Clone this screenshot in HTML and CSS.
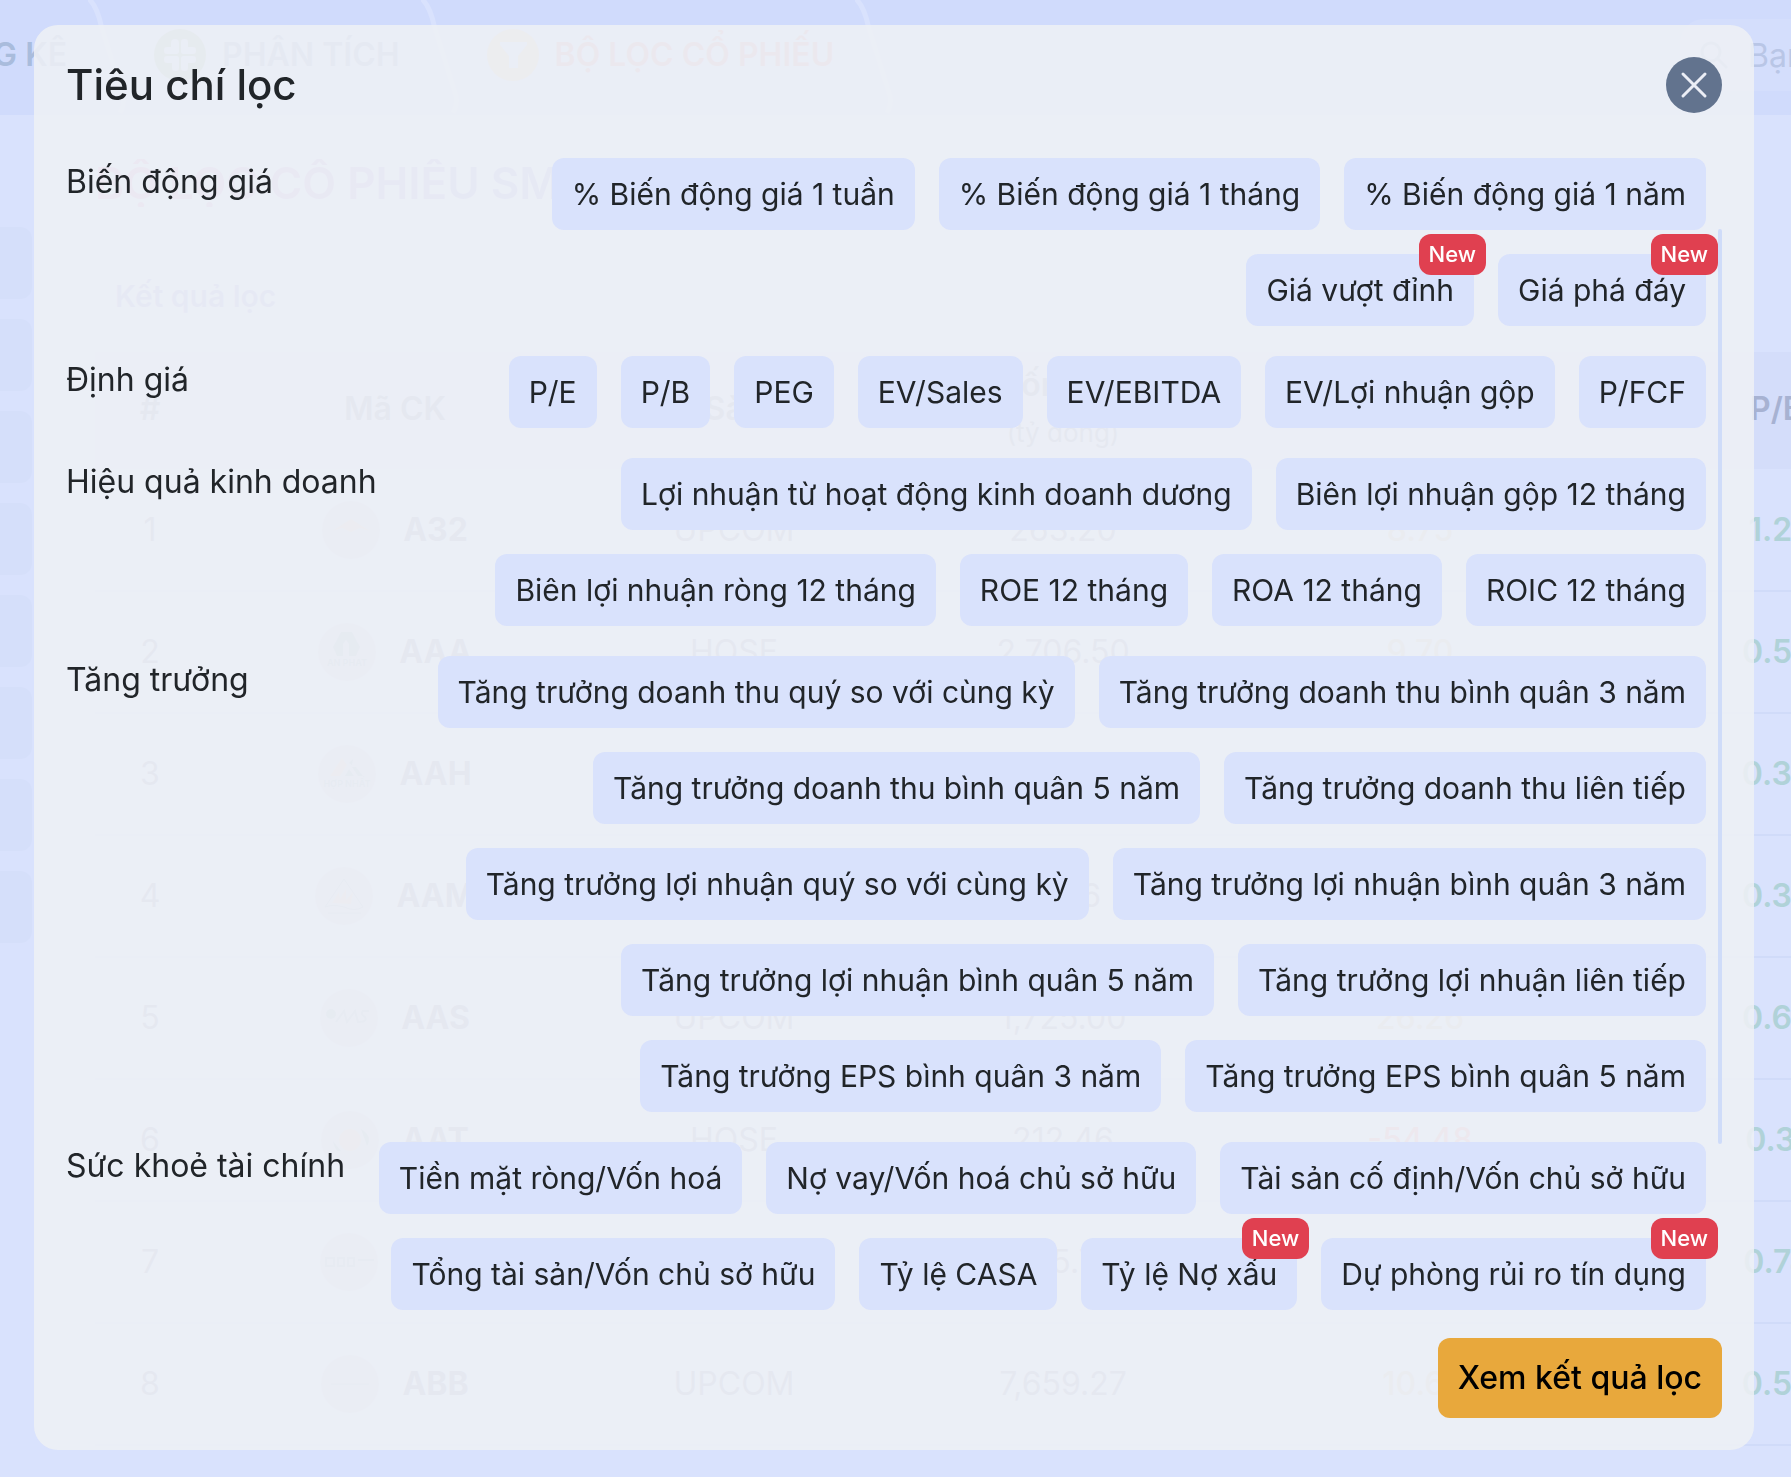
FILE: index.html
```html
<!DOCTYPE html>
<html lang="vi">
<head>
  <meta charset="UTF-8">
  <meta name="viewport" content="width=device-width, initial-scale=1.0">
  <title>Bộ lọc cổ phiếu</title>
  <link rel="stylesheet" href="styles.css">
</head>
<body>
  <div class="page">
    <header class="topbar">
      <nav class="tabs">
        <a href="#" class="tab tab-first">THỐNG KÊ</a>
        <svg class="divider" width="40" height="115" viewBox="0 0 40 115"><path d="M0 -2Q9 6 13 25L35 96Q37 104 32 113"/></svg>
        <a href="#" class="tab">
          <svg width="52" height="52" viewBox="0 0 52 52">
            <circle cx="26" cy="26" r="26" fill="#b3c9c8"/>
            <g fill="#cfdbfb">
              <rect x="17" y="10" width="8" height="15" rx="4"/>
              <rect x="10" y="18" width="15" height="7" rx="3"/>
              <rect x="27" y="10" width="7" height="15" rx="3"/>
              <rect x="27" y="18" width="15" height="7" rx="3"/>
              <rect x="10" y="27" width="15" height="7" rx="3"/>
              <rect x="18" y="27" width="7" height="15" rx="3"/>
              <rect x="27" y="27" width="15" height="7" rx="3"/>
              <rect x="27" y="27" width="7" height="15" rx="3"/>
            </g>
          </svg>
          PHÂN TÍCH
        </a>
        <svg class="divider" width="40" height="115" viewBox="0 0 40 115"><path d="M0 -2Q9 6 13 25L35 96Q37 104 32 113"/></svg>
        <a href="#" class="tab active">
          <svg width="52" height="52" viewBox="0 0 52 52">
            <circle cx="26" cy="26" r="26" fill="#dfd3c8"/>
            <path d="M13 13H40V16L31 27V39H22V27L13 16Z" fill="#cfdbfb"/>
          </svg>
          BỘ LỌC CỔ PHIẾU
        </a>
        <svg class="divider" width="40" height="115" viewBox="0 0 40 115"><path d="M0 -2Q9 6 13 25L35 96Q37 104 32 113"/></svg>
      </nav>
      <label class="search">
        <svg width="28" height="28" viewBox="0 0 28 28" fill="none" stroke="#bccae8" stroke-width="3" stroke-linecap="round"><circle cx="11" cy="11" r="9"/><path d="M18 18L26 26"/></svg>
        <input type="text" placeholder="Bạn muốn tìm gì?" aria-label="Tìm kiếm">
      </label>
    </header>

    <div class="main">
      <aside class="sidebar">
        <span></span><span></span><span></span><span></span>
        <span></span><span></span><span></span><span></span>
      </aside>
      <section class="content">
        <h1>BỘ LỌC CỔ PHIẾU SMART</h1>
        <h2>Kết quả lọc</h2>
        <table>
          <colgroup><col class="c-no"><col class="c-code"><col class="c-floor"><col class="c-cap"><col class="c-pe"><col class="c-pb"></colgroup>
          <thead>
            <tr><th>#</th><th>Mã CK</th><th>Sàn</th><th>Vốn hoá<small>(tỷ đồng)</small></th><th>P/E</th><th>P/B</th></tr>
          </thead>
          <tbody>
            <tr>
              <td>1</td>
              <td><div class="code"><svg class="logo" viewBox="0 0 58 58"><circle cx="29" cy="29" r="29"/><path class="warm" d="M10 30L29 18L48 30L38 27L29 31L20 27Z"/></svg>A32</div></td>
              <td>UPCOM</td><td>263.20</td><td class="pe">8.75</td><td class="pb">1.21</td>
            </tr>
            <tr>
              <td>2</td>
              <td><div class="code"><svg class="logo" viewBox="0 0 58 58"><circle cx="29" cy="29" r="29"/><path class="cool" d="M23 9H34L42 24L38 33H31V21L28 17L25 21V33H19L15 24Z"/><text x="29" y="43">AN PHAT</text></svg>AAA</div></td>
              <td>HOSE</td><td>2,706.50</td><td class="pe">9.70</td><td class="pb">0.52</td>
            </tr>
            <tr>
              <td>3</td>
              <td><div class="code"><svg class="logo" viewBox="0 0 58 58"><circle cx="29" cy="29" r="29"/><path class="warm" d="M12 31L24 13L29 20L22 31Z"/><path class="cool" d="M27 31L31 24L36 31ZM34 22L38 22L45 31H40ZM31 18L35 14L34 20Z"/><text x="29" y="42">HỢP NHẤT</text></svg>AAH</div></td>
              <td>UPCOM</td><td>424.42</td><td class="pe">12.40</td><td class="pb">0.36</td>
            </tr>
            <tr>
              <td>4</td>
              <td><div class="code"><svg class="logo" viewBox="0 0 58 58"><circle cx="29" cy="29" r="29"/><path class="line" d="M10 40L29 12L48 40Q40 45 29 40Q18 37 10 40ZM13 46H46"/><path class="warm" d="M17 36L24 25L25 32L31 22V33L38 25L36 37Z"/></svg>AAM</div></td>
              <td>HOSE</td><td>73.16</td><td class="pe">30.12</td><td class="pb">0.35</td>
            </tr>
            <tr>
              <td>5</td>
              <td><div class="code"><svg class="logo" viewBox="0 0 58 58"><circle cx="29" cy="29" r="29"/><circle class="cool" cx="11" cy="25" r="5"/><path class="line thick" d="M16 33L24 22L27 33L35 22L38 33Q48 33 45 28Q40 25 43 22L49 22"/></svg>AAS</div></td>
              <td>UPCOM</td><td>1,725.00</td><td class="pe">26.26</td><td class="pb">0.65</td>
            </tr>
            <tr>
              <td>6</td>
              <td><div class="code"><svg class="logo" viewBox="0 0 58 58"><circle cx="29" cy="29" r="29"/><circle class="warm" cx="29" cy="29" r="11"/><path class="cool" d="M40 18Q52 25 46 35ZM12 30Q14 42 20 40Z"/></svg>AAT</div></td>
              <td>HOSE</td><td>212.46</td><td class="pe down">-54.48</td><td class="pb">0.31</td>
            </tr>
            <tr>
              <td>7</td>
              <td><div class="code"><svg class="logo" viewBox="0 0 58 58"><circle cx="29" cy="29" r="29"/><path class="line thick" d="M6 25H14V33H6ZM18 25H24V33H18ZM28 25H34V33H28ZM38 27H54"/></svg>AAV</div></td>
              <td>HNX</td><td>445.75</td><td class="pe">18.20</td><td class="pb">0.74</td>
            </tr>
            <tr>
              <td>8</td>
              <td><div class="code"><svg class="logo" viewBox="0 0 58 58"><circle cx="29" cy="29" r="29"/><path class="line" d="M10 29H48"/></svg>ABB</div></td>
              <td>UPCOM</td><td>7,659.27</td><td class="pe">10.61</td><td class="pb">0.55</td>
            </tr>
          </tbody>
        </table>
      </section>
    </div>
  </div>

  <div class="overlay">
    <div class="modal" role="dialog" aria-labelledby="modal-title">
      <div class="modal-header">
        <h2 id="modal-title">Tiêu chí lọc</h2>
        <button class="close" aria-label="Đóng">
          <svg width="28" height="28" viewBox="0 0 28 28"><path d="M3 3L25 25M25 3L3 25"/></svg>
        </button>
      </div>

      <div class="modal-body">
        <div class="groups">
          <div class="group">
            <h3>Biến động giá</h3>
            <div class="chips">
              <button class="chip">% Biến động giá 1 tuần</button>
              <button class="chip">% Biến động giá 1 tháng</button>
              <button class="chip">% Biến động giá 1 năm</button>
              <button class="chip">Giá vượt đỉnh<span class="badge">New</span></button>
              <button class="chip">Giá phá đáy<span class="badge">New</span></button>
            </div>
          </div>
          <div class="group">
            <h3>Định giá</h3>
            <div class="chips">
              <button class="chip">P/E</button>
              <button class="chip">P/B</button>
              <button class="chip">PEG</button>
              <button class="chip">EV/Sales</button>
              <button class="chip">EV/EBITDA</button>
              <button class="chip">EV/Lợi nhuận gộp</button>
              <button class="chip">P/FCF</button>
            </div>
          </div>
          <div class="group">
            <h3>Hiệu quả kinh doanh</h3>
            <div class="chips">
              <button class="chip">Lợi nhuận từ hoạt động kinh doanh dương</button>
              <button class="chip">Biên lợi nhuận gộp 12 tháng</button>
              <button class="chip">Biên lợi nhuận ròng 12 tháng</button>
              <button class="chip">ROE 12 tháng</button>
              <button class="chip">ROA 12 tháng</button>
              <button class="chip">ROIC 12 tháng</button>
            </div>
          </div>
          <div class="group">
            <h3>Tăng trưởng</h3>
            <div class="chips">
              <button class="chip">Tăng trưởng doanh thu quý so với cùng kỳ</button>
              <button class="chip">Tăng trưởng doanh thu bình quân 3 năm</button>
              <button class="chip">Tăng trưởng doanh thu bình quân 5 năm</button>
              <button class="chip">Tăng trưởng doanh thu liên tiếp</button>
              <button class="chip">Tăng trưởng lợi nhuận quý so với cùng kỳ</button>
              <button class="chip">Tăng trưởng lợi nhuận bình quân 3 năm</button>
              <button class="chip">Tăng trưởng lợi nhuận bình quân 5 năm</button>
              <button class="chip">Tăng trưởng lợi nhuận liên tiếp</button>
              <button class="chip">Tăng trưởng EPS bình quân 3 năm</button>
              <button class="chip">Tăng trưởng EPS bình quân 5 năm</button>
            </div>
          </div>
          <div class="group">
            <h3>Sức khoẻ tài chính</h3>
            <div class="chips">
              <button class="chip">Tiền mặt ròng/Vốn hoá</button>
              <button class="chip">Nợ vay/Vốn hoá chủ sở hữu</button>
              <button class="chip">Tài sản cố định/Vốn chủ sở hữu</button>
              <button class="chip">Tổng tài sản/Vốn chủ sở hữu</button>
              <button class="chip">Tỷ lệ CASA</button>
              <button class="chip">Tỷ lệ Nợ xấu<span class="badge">New</span></button>
              <button class="chip">Dự phòng rủi ro tín dụng<span class="badge">New</span></button>
            </div>
          </div>
        </div>
        <div class="scroll-thumb"></div>
      </div>

      <div class="modal-footer">
        <button class="submit">Xem kết quả lọc</button>
      </div>
    </div>
  </div>
</body>
</html>
```
FILE: styles.css
```css
* {
  box-sizing: border-box;
}
body {
  margin: 0;
  height: 100vh;
  overflow: hidden;
  font-family: Inter, 'Noto Sans', sans-serif;
  font-size: 32px;
  line-height: 48px;
  color: #212529;
  background-color: #d9e2fd;
}
h1, h2, h3 {
  margin: 0;
}
button, input {
  font-family: inherit;
  border: none;
}
button {
  cursor: pointer;
}

/* page behind the dialog */
.page {
  height: 100vh;
  overflow: hidden;
  color: #a7b2d2;
}
.topbar {
  display: flex;
  justify-content: space-between;
  height: 115px;
  background-color: #d0dbfc;
}
.tabs {
  display: flex;
}
.tab {
  display: flex;
  align-items: center;
  gap: 16px;
  height: 110px;
  color: #a9bcdc;
  font-weight: 600;
  text-decoration: none;
  white-space: nowrap;
}
.tab-first {
  width: 67px;
  justify-content: flex-end;
  overflow: hidden;
}
.tab.active {
  color: #d8b4c2;
}
.divider {
  margin: 0 26px 0 21px;
  fill: none;
  stroke: #d9e2fd;
  stroke-width: 5;
}
.search {
  display: flex;
  align-items: center;
  gap: 20px;
  width: 111px;
  height: 72px;
  margin-top: 19px;
  padding-left: 20px;
  border-radius: 24px 0 0 24px;
  background-color: #d4defc;
}
.search svg {
  flex-shrink: 0;
}
.search input {
  flex: 1;
  min-width: 0;
  padding: 0;
  font-size: 32px;
  background: none;
}
.search input::placeholder {
  color: #b9c6e6;
  opacity: 1;
}
.main {
  display: flex;
}
.sidebar {
  flex: 0 0 62px;
  display: flex;
  flex-direction: column;
  gap: 20px;
  padding: 112px 30px 0 0;
}
.sidebar span {
  height: 72px;
  border-radius: 0 12px 12px 0;
  background-color: #d5dffa;
}
.content {
  flex: 1;
  min-width: 0;
  padding: 44px 0 0 33px;
}
.content h1 {
  width: max-content;
  font-size: 44px;
  line-height: 48px;
  font-weight: 600;
  color: transparent;
  background: linear-gradient(90deg, #dcb4dc, #b0b8f0 70%);
  -webkit-background-clip: text;
  background-clip: text;
}
.content h2 {
  margin: 65px 0 32px 20px;
  font-size: 30px;
  font-weight: 600;
  color: #b4bcf0;
}
table {
  width: 1862px;
  table-layout: fixed;
  border-collapse: collapse;
  text-align: center;
}
.c-no { width: 110px; }
.c-code { width: 380px; }
.c-floor { width: 298px; }
.c-cap { width: 360px; }
.c-pe { width: 354px; }
.c-pb { width: 360px; }
th {
  height: 117px;
  padding: 0 0 4px;
  font-weight: 600;
  background-color: #d4ddfa;
}
th small {
  display: block;
  font-size: 26px;
  font-weight: 400;
}
td {
  height: 122px;
  padding: 0;
  border-bottom: 2px solid #d0dbf9;
}
.code {
  display: flex;
  align-items: center;
  justify-content: center;
  gap: 23px;
  font-weight: 700;
}
.pe {
  color: #cfd0cc;
  font-weight: 500;
}
.pe.down {
  color: #e3b4c0;
}
.pb {
  color: #b0d2d8;
  font-weight: 600;
}
.logo {
  width: 58px;
  height: 58px;
  fill: #cfd9f0;
}
.logo .warm { fill: #dcd2d4; }
.logo .cool { fill: #b4c4da; }
.logo .line { fill: none; stroke: #b8c4dc; stroke-width: 1; }
.logo .thick { stroke-width: 2; }
.logo text {
  fill: #b4c4da;
  font-size: 9px;
  text-anchor: middle;
}

/* filter dialog */
.overlay {
  position: fixed;
  inset: 0;
  padding: 25px 37px 27px 34px;
}
.modal {
  padding: 32px;
  border-radius: 24px;
  background-color: rgba(238, 240, 245, 0.87);
}
.modal-header {
  display: flex;
  align-items: center;
  justify-content: space-between;
}
.modal-header h2 {
  font-size: 42px;
  font-weight: 500;
}
.close {
  display: flex;
  align-items: center;
  justify-content: center;
  width: 56px;
  height: 56px;
  padding: 0;
  border-radius: 50%;
  background-color: #62738e;
}
.close path {
  stroke: #ebeef6;
  stroke-width: 3;
  stroke-linecap: round;
}
.modal-body {
  display: flex;
  gap: 12px;
  margin: 45px 0 28px;
}
.groups {
  flex: 1;
  display: flex;
  flex-direction: column;
  gap: 30px;
}
.group {
  display: flex;
}
.group h3 {
  flex: 0 0 300px;
  font-size: 32px;
  font-weight: 400;
  white-space: nowrap;
}
.chips {
  flex: 1;
  display: flex;
  flex-wrap: wrap;
  justify-content: flex-end;
  gap: 24px;
}
.chip {
  position: relative;
  padding: 14px 20px;
  border-radius: 12px;
  font-size: 30px;
  line-height: 44px;
  white-space: nowrap;
  color: #212529;
  background-color: #d9e2fc;
}
.badge {
  position: absolute;
  top: -20px;
  right: -12px;
  padding: 0 10px;
  border-radius: 12px;
  font-size: 22px;
  line-height: 41px;
  font-weight: 500;
  color: #fff;
  background-color: #e04050;
}
.scroll-thumb {
  width: 4px;
  margin: 71px 0 166px;
  border-radius: 2px;
  background-color: #cfdcf9;
}
.modal-footer {
  display: flex;
  justify-content: flex-end;
}
.submit {
  padding: 16px 20px;
  border-radius: 12px;
  font-size: 32px;
  line-height: 48px;
  font-weight: 500;
  color: #000;
  background-color: #e8a83c;
}
```
